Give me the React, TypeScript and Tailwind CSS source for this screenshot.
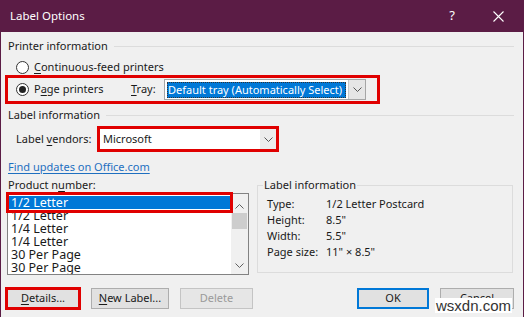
import { ReactNode } from 'react';

const font = { fontFamily: '"Noto Sans", "Open Sans", sans-serif' };

function Chevron({ up = false, color = '#555' }: { up?: boolean; color?: string }) {
  return (
    <svg width="9" height="5" viewBox="0 0 9 5" className="block">
      <polyline
        points={up ? '0.5,4.5 4.5,0.5 8.5,4.5' : '0.5,0.5 4.5,4.5 8.5,0.5'}
        fill="none"
        stroke={color}
        strokeWidth="1"
      />
    </svg>
  );
}

function Radio({ checked = false }: { checked?: boolean }) {
  return (
    <span className="w-[13px] h-[13px] rounded-full border border-[#333] bg-white flex items-center justify-center shrink-0">
      {checked && <span className="w-[7px] h-[7px] rounded-full bg-[#222]"></span>}
    </span>
  );
}

function Heading({ children }: { children: ReactNode }) {
  return (
    <div className="h-[14px] flex items-center leading-[14px]">
      <span className="text-[#1a1a1a]">{children}</span>
      <div className="flex-1 h-px bg-[#dcdcdc] ml-[6px]"></div>
    </div>
  );
}

export default function App() {
  const products = ['1/2 Letter', '1/2 Letter', '1/4 Letter', '1/4 Letter', '30 Per Page', '30 Per Page'];
  const info = [
    ['Type:', '1/2 Letter Postcard'],
    ['Height:', '8.5"'],
    ['Width:', '5.5"'],
    ['Page size:', '11" × 8.5"'],
  ];

  return (
    <div
      className="relative w-[524px] h-[317px] overflow-hidden bg-[#f0f0f0] border-x border-[#5b1c45] flex flex-col text-[11px] text-[#1a1a1a]"
      style={font}
    >
      {/* title bar */}
      <div className="h-[32px] shrink-0 bg-[#5b1c45] flex items-center justify-between text-white">
        <span className="pl-[9px] text-[11.5px]">Label Options</span>
        <div className="flex h-full pr-[2px]">
          <div className="w-[46px] h-full flex items-center justify-center text-[13px]">?</div>
          <div className="w-[46px] h-full flex items-center justify-center">
            <svg width="11" height="11" viewBox="0 0 11 11">
              <path d="M0.5 0.5 L10.5 10.5 M10.5 0.5 L0.5 10.5" stroke="#fff" strokeWidth="1.1" />
            </svg>
          </div>
        </div>
      </div>

      <div className="flex flex-col pl-[7px] pr-[9px]">
        <div className="mt-[7px]">
          <Heading>Printer information</Heading>
        </div>

        <div className="mt-[7px] h-[14px] flex items-center pl-[8px] leading-[14px]">
          <Radio />
          <span className="ml-[5px]">
            <u className="underline-offset-2">C</u>ontinuous-feed printers
          </span>
        </div>

        <div className="mt-[1px] ml-[-3px] w-[375px] h-[29px] border-[3px] border-[#e00000] flex items-center pl-[8px]">
          <Radio checked />
          <span className="ml-[5px] w-[97px]">
            P<u className="underline-offset-2">a</u>ge printers
          </span>
          <span className="w-[33px]">
            <u className="underline-offset-2">T</u>ray:
          </span>
          <div className="w-[202px] h-[21px] border border-[#a6a6a6] bg-white flex items-center">
            <div className="ml-[2px] w-[179px] h-[16px] bg-[#0078d7] text-white leading-[16px] pl-[1px] outline-dotted outline-1 outline-[#333] -outline-offset-1">
              Default tray (Automatically Select)
            </div>
            <div className="ml-auto w-[17px] h-full bg-[#e6e6e6] border-l border-[#c8c8c8] flex items-center justify-center">
              <Chevron />
            </div>
          </div>
        </div>

        <div className="mt-[4px]">
          <Heading>Label information</Heading>
        </div>

        <div className="mt-[4px] h-[26px] flex items-center pl-[8px]">
          <span className="w-[81px]">
            Label <u className="underline-offset-2">v</u>endors:
          </span>
          <div className="w-[182px] h-[26px] border-[3px] border-[#e00000] bg-white flex items-center">
            <span className="pl-[3px]">Microsoft</span>
            <div className="ml-auto w-[16px] h-full bg-[#ececec] flex items-center justify-center">
              <Chevron />
            </div>
          </div>
        </div>

        <div className="mt-[8px] h-[14px] leading-[14px]">
          <span className="text-[#1e6fc0] underline underline-offset-2">Find updates on Office.com</span>
        </div>

        <div className="mt-[4px] flex">
          <div className="w-[241px] flex flex-col">
            <div className="h-[14px] leading-[14px]">
              Product n<u className="underline-offset-2">u</u>mber:
            </div>
            <div className="relative mt-[1px] ml-[-1px] w-[242px] h-[82px] border border-[#828282] bg-white flex">
              <div className="flex-1 pt-[2px] flex flex-col overflow-hidden text-[12.5px]">
                {products.map((p, i) => (
                  <div
                    key={i}
                    className={`shrink-0 h-[13px] leading-[13px] mx-[1px] px-[2px] whitespace-nowrap ${i === 0 ? 'bg-[#0078d7] text-white' : ''}`}
                  >
                    {p}
                  </div>
                ))}
              </div>
              <div className="w-[17px] bg-[#f0f0f0] flex flex-col">
                <div className="h-[19px] flex items-end justify-center pb-[4px]">
                  <Chevron up color="#606060" />
                </div>
                <div className="h-[16px] mx-[1px] bg-[#cdcdcd]"></div>
                <div className="mt-auto h-[17px] flex items-center justify-center">
                  <Chevron color="#606060" />
                </div>
              </div>
              <div className="absolute left-[-2px] top-[-2px] w-[227px] h-[21px] border-[3px] border-[#e00000]"></div>
            </div>
          </div>

          <fieldset className="ml-[8px] w-[256px] h-[95px] border border-[#dcdcdc] pl-[9px]">
            <legend className="ml-[-4px] px-[1px] leading-[14px]">Label information</legend>
            <div className="mt-[4px] flex flex-col">
              {info.map(([k, v]) => (
                <div key={k} className="h-[16px] leading-[16px] flex">
                  <span className="w-[59px]">{k}</span>
                  <span>{v}</span>
                </div>
              ))}
            </div>
          </fieldset>
        </div>

        <div className="mt-[12px] h-[23px] flex items-center">
          <div className="ml-[-3px] w-[76px] h-[23px] border-[3px] border-[#e00000] bg-[#e1e1e1] flex items-center justify-center">
            <span>
              <u className="underline-offset-2">D</u>etails...
            </span>
          </div>
          <div className="ml-[10px] w-[78px] h-[21px] border border-[#adadad] bg-[#e1e1e1] flex items-center justify-center">
            <span>
              <u className="underline-offset-2">N</u>ew Label...
            </span>
          </div>
          <div className="ml-[11px] w-[73px] h-[21px] border border-[#c4c4c4] bg-[#e6e6e6] flex items-center justify-center text-[#9a9a9a]">
            Delete
          </div>
          <div className="ml-auto w-[72px] h-[21px] border-2 border-[#0078d7] bg-[#e1e1e1] flex items-center justify-center">
            OK
          </div>
          <div className="ml-[11px] w-[74px] h-[21px] border border-[#adadad] bg-[#e1e1e1] flex items-center justify-center">
            Cancel
          </div>
        </div>
      </div>

      <div
        className="absolute right-[11px] bottom-[4px] bg-white px-[1px] text-[15px] leading-[15px] text-[#333]"
        style={{ fontFamily: '"Liberation Sans", Arial, sans-serif' }}
      >
        wsxdn.com
      </div>
    </div>
  );
}
